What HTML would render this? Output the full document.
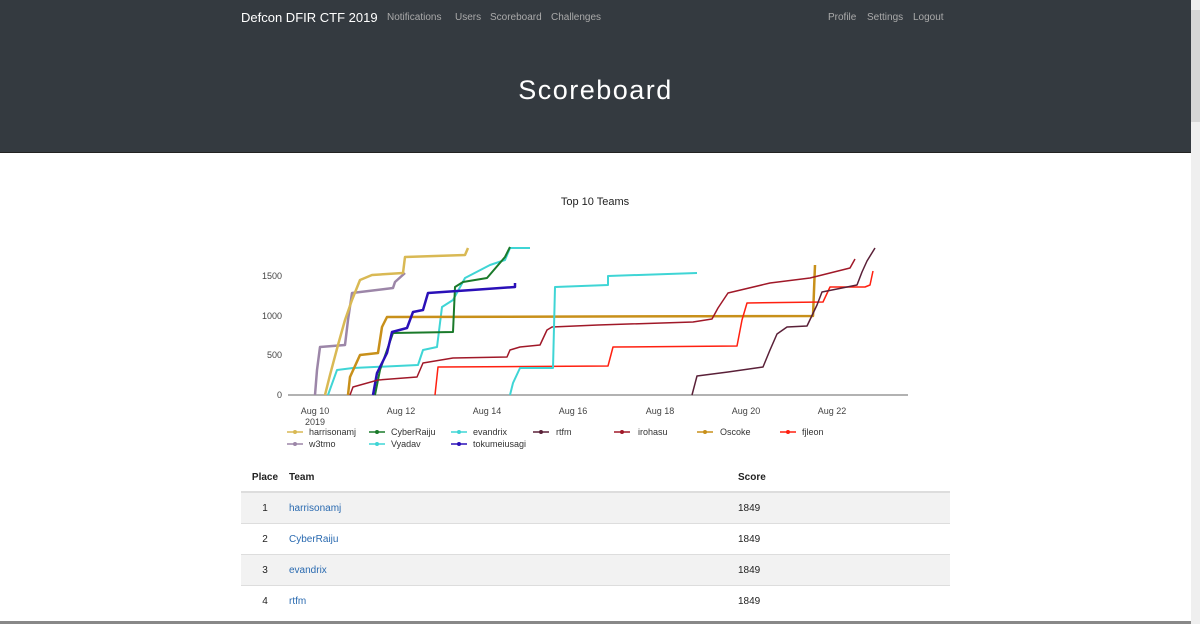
<!DOCTYPE html>
<html><head><meta charset="utf-8"><style>
*{margin:0;padding:0;box-sizing:border-box}
body{width:1200px;height:624px;overflow:hidden;background:#fff;font-family:"Liberation Sans",sans-serif;position:relative}
.hdr{position:absolute;left:0;top:0;width:1191px;height:153px;background:#343a40;border-bottom:1px solid #222}
.nav{position:absolute;top:12px;font-size:10px;color:#aaa;white-space:nowrap}
.brand{position:absolute;left:241px;top:10px;font-size:13px;color:#fff}
.title{position:absolute;left:0;width:1191px;top:75px;text-align:center;font-size:27px;color:#fff;letter-spacing:1.5px}
.sb{position:absolute;left:1191px;top:0;width:9px;height:624px;background:#efefef}
.thumb{position:absolute;left:1191px;top:10px;width:9px;height:112px;background:#d6d6d6}
table{position:absolute;left:241px;top:462px;width:709px;border-collapse:collapse;font-size:10px;color:#222}
th{text-align:left;font-weight:bold;height:30px;border-bottom:2px solid #ddd;padding-top:2px}
td{height:31px;border-top:1px solid #ddd;padding-top:2px}
tr.g td{background:#f2f2f2}
td a{color:#2a6ab0;text-decoration:none}
.bot{position:absolute;left:0;top:621px;width:1191px;height:3px;background:#888}
</style></head><body>
<div class="hdr">
<div class="brand">Defcon DFIR CTF 2019</div>
<div class="nav" style="left:387px">Notifications</div>
<div class="nav" style="left:455px">Users</div>
<div class="nav" style="left:490px">Scoreboard</div>
<div class="nav" style="left:551px">Challenges</div>
<div class="nav" style="left:828px">Profile</div>
<div class="nav" style="left:867px">Settings</div>
<div class="nav" style="left:913px">Logout</div>
<div class="title">Scoreboard</div>
</div>
<div class="sb"></div><div class="thumb"></div>
<svg width="1190" height="460" style="position:absolute;left:0;top:0" font-family="Liberation Sans,sans-serif" font-size="9" fill="#444">
<defs><marker id="m" markerWidth="4" markerHeight="4" refX="2" refY="2" markerUnits="userSpaceOnUse"><circle cx="2" cy="2" r="1.8" fill="context-stroke"/></marker></defs>
<text x="595" y="205" text-anchor="middle" font-size="11" fill="#222">Top 10 Teams</text>
<g text-anchor="end"><text x="282" y="279">1500</text><text x="282" y="319">1000</text><text x="282" y="358">500</text><text x="282" y="398">0</text></g>
<line x1="288" y1="395" x2="908" y2="395" stroke="#999" stroke-width="1.5"/>
<g text-anchor="middle"><text x="315" y="414">Aug 10</text><text x="315" y="425">2019</text><text x="401" y="414">Aug 12</text><text x="487" y="414">Aug 14</text><text x="573" y="414">Aug 16</text><text x="660" y="414">Aug 18</text><text x="746" y="414">Aug 20</text><text x="832" y="414">Aug 22</text></g>
<g fill="none" stroke-width="1.5" stroke-linejoin="round">
<polyline stroke="#9c86a8" stroke-width="2.5" points="315,395 317,370 320,347 345,345 348,320 352,293 393,288 395,282 405,273"/>
<polyline stroke="#d9b954" stroke-width="2.5" points="325,395 330,375 338,345 345,320 352,300 360,280 372,275 403,273 405,257 465,255 468,248"/>
<polyline stroke="#3fd5d5" stroke-width="2" points="328,395 337,370 353,368 418,365 423,350 437,347 442,307 453,300 465,278 490,265 505,260 510,248 530,248"/>
<polyline stroke="#c8901a" stroke-width="2.5" points="348,395 350,377 360,355 378,353 382,327 387,317 813,316 815,265"/>
<polyline stroke="#1a7a2a" stroke-width="2" points="375,395 380,370 393,333 453,332 455,287 463,282 487,278 505,257 510,247"/>
<polyline stroke="#2a10b8" stroke-width="2.5" points="373,395 377,373 387,353 392,332 407,328 413,312 423,310 428,293 472,290 515,287 515,283"/>
<polyline stroke="#a01828" points="350,395 353,387 378,380 417,377 423,363 453,358 507,357 510,350 520,347 540,345 547,330 552,327 598,325 693,322 712,319 718,308 728,293 770,283 810,278 850,268 855,259"/>
<polyline stroke="#ff2010" points="435,395 438,367 608,366 613,347 737,346 742,320 747,303 823,302 830,287 865,287 870,285 873,271"/>
<polyline stroke="#3fd5d5" stroke-width="2" points="510,395 513,383 520,368 553,368 555,287 608,285 608,276 697,273"/>
<polyline stroke="#5a2038" points="692,395 697,376 728,372 763,367 770,350 777,334 787,327 807,326 817,305 822,292 857,285 862,272 867,261 875,248"/>
</g>
<g font-size="9" fill="#333">
<g stroke-width="1.5"><line x1="287" y1="432" x2="303" y2="432" stroke="#d9b954"/><line x1="369" y1="432" x2="385" y2="432" stroke="#1a7a2a"/><line x1="451" y1="432" x2="467" y2="432" stroke="#3fd5d5"/><line x1="533" y1="432" x2="549" y2="432" stroke="#5a2038"/><line x1="614" y1="432" x2="630" y2="432" stroke="#a01828"/><line x1="697" y1="432" x2="713" y2="432" stroke="#c8901a"/><line x1="780" y1="432" x2="796" y2="432" stroke="#ff2010"/><line x1="287" y1="444" x2="303" y2="444" stroke="#9c86a8"/><line x1="369" y1="444" x2="385" y2="444" stroke="#3fd5d5"/><line x1="451" y1="444" x2="467" y2="444" stroke="#2a10b8"/></g>
<g><circle cx="295" cy="432" r="2" fill="#d9b954"/><circle cx="377" cy="432" r="2" fill="#1a7a2a"/><circle cx="459" cy="432" r="2" fill="#3fd5d5"/><circle cx="541" cy="432" r="2" fill="#5a2038"/><circle cx="622" cy="432" r="2" fill="#a01828"/><circle cx="705" cy="432" r="2" fill="#c8901a"/><circle cx="788" cy="432" r="2" fill="#ff2010"/><circle cx="295" cy="444" r="2" fill="#9c86a8"/><circle cx="377" cy="444" r="2" fill="#3fd5d5"/><circle cx="459" cy="444" r="2" fill="#2a10b8"/></g>
<text x="309" y="435">harrisonamj</text><text x="391" y="435">CyberRaiju</text><text x="473" y="435">evandrix</text><text x="556" y="435">rtfm</text><text x="638" y="435">irohasu</text><text x="720" y="435">Oscoke</text><text x="802" y="435">fjleon</text>
<text x="309" y="447">w3tmo</text><text x="391" y="447">Vyadav</text><text x="473" y="447">tokumeiusagi</text>
</g>
</svg>
<table>
<tr><th style="width:48px;text-align:center">Place</th><th style="width:449px">Team</th><th>Score</th></tr>
<tr class="g"><td style="text-align:center">1</td><td><a>harrisonamj</a></td><td>1849</td></tr>
<tr><td style="text-align:center">2</td><td><a>CyberRaiju</a></td><td>1849</td></tr>
<tr class="g"><td style="text-align:center">3</td><td><a>evandrix</a></td><td>1849</td></tr>
<tr><td style="text-align:center">4</td><td><a>rtfm</a></td><td>1849</td></tr>
</table>
<div class="bot"></div>
</body></html>
